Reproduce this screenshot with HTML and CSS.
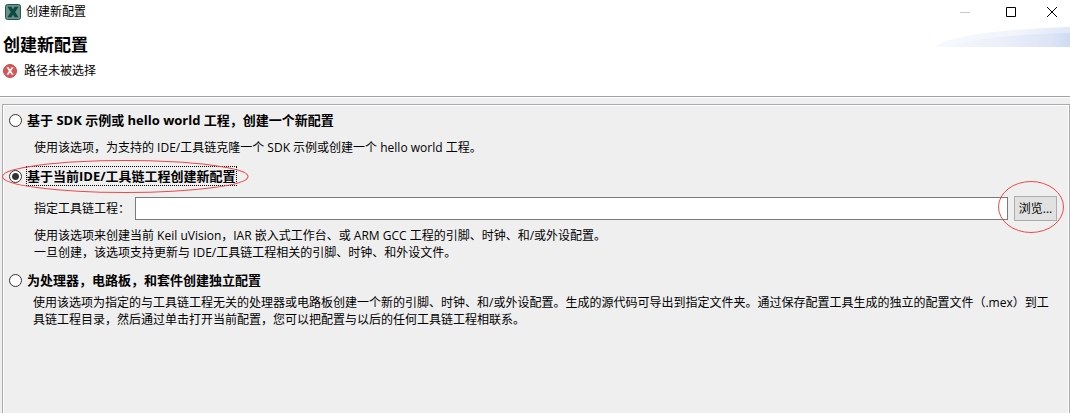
FILE: index.html
```html
<!DOCTYPE html>
<html lang="zh-CN">
<head>
<meta charset="utf-8">
<title>创建新配置</title>
<link rel="stylesheet" href="styles.css">
</head>
<body>
<div class="dialog">
  <header class="titlebar">
    <svg class="app-icon" viewBox="0 0 16 16" aria-hidden="true">
      <rect x=".5" y=".5" width="15" height="15" rx="2" fill="#6d8f88" stroke="#1d5a52"/>
      <path d="M2.5 2.8h4L8 5.6l1.6-2.8h3.9L10.2 8l3.3 5.2H9.6L8 10.4l-1.5 2.8h-4L5.8 8z" fill="#0b4a43"/>
    </svg>
    <span class="caption">创建新配置</span>
    <div class="window-buttons">
      <button class="window-button" aria-label="最小化" disabled>
        <svg viewBox="0 0 10 10"><path d="M0 5.5h10" stroke="#c8c8c8"/></svg>
      </button>
      <button class="window-button" aria-label="最大化">
        <svg viewBox="0 0 10 10"><path d="M.5.5h9v9h-9z" fill="none" stroke="#000"/></svg>
      </button>
      <button class="window-button" aria-label="关闭">
        <svg viewBox="0 0 10 10"><path d="M0 0l10 10M10 0L0 10" stroke="#000"/></svg>
      </button>
    </div>
  </header>

  <section class="banner">
    <svg class="swoosh" viewBox="0 0 135 20" aria-hidden="true">
      <defs>
        <linearGradient id="outer"><stop offset="0" stop-color="#f6f9fe"/><stop offset=".6" stop-color="#f1f4fb"/><stop offset="1" stop-color="#dfe8f7"/></linearGradient>
        <linearGradient id="inner"><stop offset="0" stop-color="#f6f8fd"/><stop offset=".5" stop-color="#ebedf9"/><stop offset=".85" stop-color="#dce4f6"/><stop offset="1" stop-color="#cfdaf3"/></linearGradient>
      </defs>
      <path d="M0 20C14 8 70 2 135 0v20z" fill="url(#outer)"/>
      <path d="M10 20C40 11 85 7 135 6v14z" fill="url(#inner)"/>
    </svg>
    <h1 class="heading">创建新配置</h1>
    <p class="message">
      <svg class="error-icon" viewBox="0 0 14 14" aria-hidden="true">
        <circle cx="7" cy="7" r="6.5" fill="#db5656" stroke="#cb4b4d"/>
        <path d="M3.5 3.3h2L7 5.5l1.7-2.2h2L8.1 7l2.6 3.8h-2L7 8.5l-1.5 2.3h-2L5.9 7z" fill="#fff"/>
      </svg>
      <span>路径未被选择</span>
    </p>
  </section>

  <main class="content">
    <form class="group">
      <label class="option"><input class="radio" type="radio" name="mode"><span class="option-text">基于 SDK 示例或 hello world 工程，创建一个新配置</span></label>
      <p class="description clone">使用该选项，为支持的 IDE/工具链克隆一个 SDK 示例或创建一个 hello world 工程。</p>

      <label class="option marked"><input class="radio" type="radio" name="mode" checked><span class="option-text focused">基于当前IDE/工具链工程创建新配置</span>
        <svg class="mark mark-option" viewBox="0 0 246 33" preserveAspectRatio="none" aria-hidden="true"><ellipse cx="123" cy="16.5" rx="122.5" ry="16" /></svg>
      </label>
      <div class="path-row">
        <label for="path">指定工具链工程：</label>
        <input class="path" id="path" type="text">
        <div class="marked">
          <button class="browse" type="button">浏览...</button>
          <svg class="mark mark-browse" viewBox="0 0 66 52" aria-hidden="true"><ellipse cx="33" cy="26" rx="32.5" ry="25.5"/></svg>
        </div>
      </div>
      <p class="description current">使用该选项来创建当前 Keil uVision，IAR 嵌入式工作台、或 ARM GCC 工程的引脚、时钟、和/或外设配置。<br>一旦创建，该选项支持更新与 IDE/工具链工程相关的引脚、时钟、和外设文件。</p>

      <label class="option"><input class="radio" type="radio" name="mode"><span class="option-text">为处理器，电路板，和套件创建独立配置</span></label>
      <p class="description standalone">使用该选项为指定的与工具链工程无关的处理器或电路板创建一个新的引脚、时钟、和/或外设配置。生成的源代码可导出到指定文件夹。通过保存配置工具生成的独立的配置文件（.mex）到工具链工程目录，然后通过单击打开当前配置，您可以把配置与以后的任何工具链工程相联系。</p>
    </form>
  </main>
</div>
</body>
</html>
```

FILE: styles.css
```css
* {
  box-sizing: border-box;
}

body {
  margin: 0;
  background: #efefef;
  color: #000;
  font: 12px/17px "Open Sans", "Noto Sans CJK SC", sans-serif;
}

button,
input {
  font: inherit;
  color: inherit;
  margin: 0;
}

h1,
p {
  margin: 0;
}

svg {
  display: block;
}

.dialog {
  display: flex;
  flex-direction: column;
  min-height: 100vh;
}

.titlebar {
  display: flex;
  align-items: center;
  height: 23px;
  padding-left: 5px;
  background: #fff;
}

.app-icon {
  width: 16px;
  height: 16px;
}

.caption {
  margin-left: 5px;
}

.window-buttons {
  display: flex;
  margin-left: auto;
}

.window-button {
  display: flex;
  align-items: center;
  justify-content: center;
  width: 46px;
  height: 22px;
  padding: 0;
  border: 0;
  background: none;
}

.window-button:last-child {
  width: 36px;
}

.window-button:last-child svg {
  margin-right: 0;
}

.window-button svg {
  width: 10px;
  height: 10px;
}

.banner {
  position: relative;
  padding: 12px 3px 17px;
  background: #fff;
  border-bottom: 1px solid #a0a0a0;
}

.swoosh {
  position: absolute;
  top: 4px;
  right: 0;
  width: 135px;
  height: 20px;
}

.heading {
  font-size: 17px;
  line-height: 20px;
  font-weight: 700;
}

.message {
  display: flex;
  align-items: center;
  gap: 7px;
  margin-top: 7px;
}

.error-icon {
  width: 14px;
  height: 14px;
}

.content {
  display: flex;
  flex: 1;
  padding: 6px 0 0 2px;
  border-top: 1px solid #fff;
}

.group {
  flex: 1;
  padding: 5px 12px 12px 5px;
  border: 1px solid #a9abb0;
  border-bottom: 0;
  box-shadow: inset 1px 1px #fff, inset -1px 0 #fff;
}

.option {
  display: flex;
  align-items: center;
  width: max-content;
  height: 20px;
  font-size: 13px;
  line-height: 18px;
  font-weight: 700;
}

.option-text {
  border: 1px solid transparent;
}

.focused {
  border: 1px dotted #000;
}

.radio {
  appearance: none;
  flex: none;
  width: 13px;
  height: 13px;
  margin: 0 4px 0 1px;
  border: 1px solid #333;
  border-radius: 50%;
  background: #fff;
}

.radio:checked {
  background: radial-gradient(circle, #333 3px, #fff 4px);
}

.description {
  margin-left: 26px;
}

.clone {
  margin-top: 9px;
  margin-bottom: 10px;
}

.path-row {
  display: flex;
  align-items: center;
  margin: 10px 0 6px 26px;
}

.path {
  flex: 1;
  min-width: 0;
  height: 23px;
  margin: 0 6px 0 5px;
  padding: 0 4px;
  border: 1px solid #7a7a7a;
  background: #fff;
}

.browse {
  display: block;
  width: 43px;
  height: 25px;
  padding: 0;
  border: 1px solid #adadad;
  background: #e1e1e1;
  white-space: nowrap;
}

.current {
  margin-bottom: 9px;
}

.standalone {
  margin-top: 4px;
  margin-left: 25px;
}

.marked {
  position: relative;
}

.mark {
  position: absolute;
  fill: none;
  stroke: #f04848;
  pointer-events: none;
}

.mark-option {
  top: -6px;
  left: -6px;
  width: calc(100% + 18px);
  height: 33px;
}

.mark-browse {
  top: -15px;
  left: -16px;
  width: 66px;
  height: 52px;
}
```
